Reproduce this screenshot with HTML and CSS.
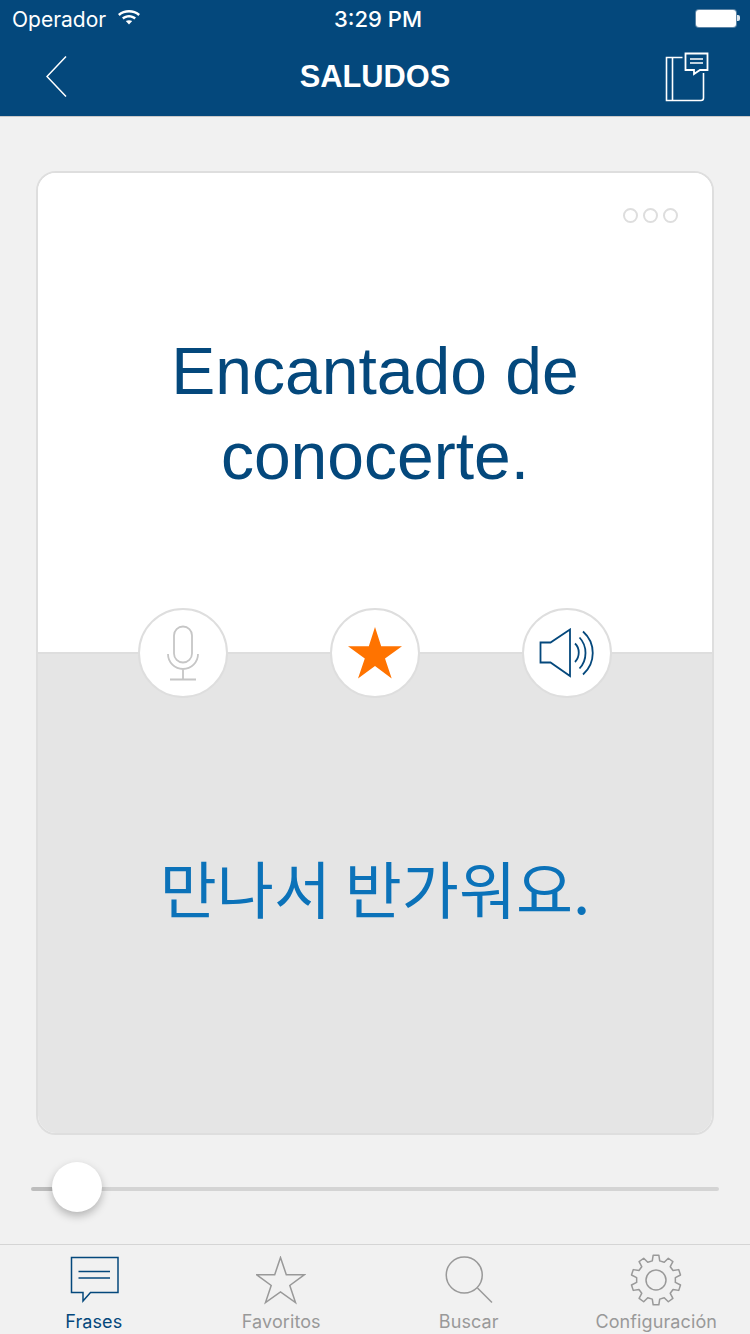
FILE: index.html
```html
<!DOCTYPE html>
<html lang="es">
<head>
<meta charset="utf-8">
<title>Saludos</title>
<link rel="stylesheet" href="styles.css">
</head>
<body>
<div class="app">
  <header class="header">
    <div class="status">
      <div class="status-left">
        <span>Operador</span>
        <svg class="wifi" width="24" height="17" viewBox="0 0 24 16"><path d="M1 5.500C7 0 17 0 23 5.500L21.300 7.400C16.300 3 7.700 3 2.700 7.400Z" fill="#fff"/><path d="M5 9C9 5.600 15 5.600 19 9L17.300 10.900C14 8.400 10 8.400 6.700 10.900Z" fill="#fff"/><path d="M8.800 12.600C10.800 11.300 13.200 11.300 15.200 12.600L12 16Z" fill="#fff"/></svg>
      </div>
      <span class="clock">3:29 PM</span>
      <div class="status-right">
        <div class="battery"></div>
        <div class="battery-tip"></div>
      </div>
    </div>
    <nav class="nav">
      <svg class="back" width="21" height="41" viewBox="0 0 21 41"><path d="M20 .5L1 20.500L20 40.500" fill="none" stroke="#fff" stroke-width="1.500"/></svg>
      <h1 class="title">SALUDOS</h1>
      <svg class="book" width="44" height="50" viewBox="0 0 44 50"><path d="M38.500 21V46Q38.500 48.500 36 48.500H1.500V5.500H17.500M7.500 5.500V48.500" fill="none" stroke="#fff" stroke-width="1.600"/><path d="M20.500 1.500H42.500V18H35L29 22V18H20.500Z" fill="none" stroke="#fff" stroke-width="1.800"/><path d="M25 7H38M25 11H38" stroke="#fff" stroke-width="1.500"/></svg>
    </nav>
  </header>

  <main class="main">
    <section class="card">
      <div class="front">
        <div class="dots"><i></i><i></i><i></i></div>
        <p class="phrase">Encantado de<br>conocerte.</p>
      </div>
      <div class="back-side">
        <p class="translation">만나서 반가워요.</p>
      </div>
      <div class="actions">
        <button class="round">
          <svg width="34" height="56" viewBox="0 0 34 56"><rect x="8" y="1.500" width="18" height="36" rx="9" fill="none" stroke="#c6c6c6" stroke-width="1.800"/><path d="M2 29A15 15 0 0 0 32 29M17 44V54.500M4 54.500H30" fill="none" stroke="#c6c6c6" stroke-width="1.800"/></svg>
        </button>
        <button class="round">
          <svg width="56" height="54" viewBox="0 0 56 54"><path d="M28 1L34.200 20.300H55L38 32.500L44.700 52.500L28 40L11 52.500L17.800 32.500L1 20.300H21.800Z" fill="#ff7300"/></svg>
        </button>
        <button class="round">
          <svg width="56" height="50" viewBox="0 0 56 50"><path d="M1.500 14.500H11.500L31 1.500V48L11.500 34.500H1.500Z" fill="none" stroke="#04487c" stroke-width="1.800"/><path d="M36 15.500C41 20 41 29 36 34M40.500 9.500C48.500 18 48.500 32 40.500 40.500M44 3.500C57 15 57 35 44 46.500" fill="none" stroke="#04487c" stroke-width="1.800"/></svg>
        </button>
      </div>
    </section>
    <div class="slider">
      <div class="track"></div>
      <div class="thumb"></div>
    </div>
  </main>

  <footer class="tabs">
    <div class="tab active">
      <svg width="50" height="50" viewBox="0 0 50 50"><path d="M2.500 1.500H49V36.500H21.500L14 45V36.500H2.500Z" fill="none" stroke="#04487c" stroke-width="1.500"/><path d="M9.500 15.500H41M9.500 22H41" stroke="#04487c" stroke-width="1.500"/></svg>
      <span>Frases</span>
    </div>
    <div class="tab">
      <svg width="50" height="50" viewBox="0 0 50 50"><path d="M24.500 1.500L30.300 18.700H48.500L33.800 29.500L39.500 46.500L24.500 36L9.500 46.500L15.200 29.500L.5 18.700H18.700Z" fill="none" stroke="#999" stroke-width="1.500"/></svg>
      <span>Favoritos</span>
    </div>
    <div class="tab">
      <svg width="50" height="50" viewBox="0 0 50 50"><circle cx="20.250" cy="19" r="18" fill="none" stroke="#999" stroke-width="1.500"/><path d="M33.500 32L48 46.500" stroke="#999" stroke-width="1.500"/></svg>
      <span>Buscar</span>
    </div>
    <div class="tab">
      <svg class="gear" width="52" height="52" viewBox="0 0 52 52"><path d="M22.280 6.860L23.170 1.160H28.830L29.720 6.860L34.240 8.330L38.310 4.240L42.890 7.570L40.260 12.700L43.050 16.550L48.750 15.630L50.500 21.020L45.350 23.620V28.380L50.500 30.980L48.750 36.370L43.050 35.450L40.260 39.300L42.890 44.430L38.310 47.760L34.240 43.670L29.720 45.140L28.830 50.840H23.170L22.280 45.140L17.760 43.670L13.690 47.760L9.110 44.430L11.740 39.300L8.950 35.450L3.250 36.370L1.500 30.980L6.650 28.380V23.620L1.500 21.020L3.250 15.630L8.950 16.550L11.740 12.700L9.110 7.570L13.690 4.240L17.760 8.330Z" fill="none" stroke="#999" stroke-width="1.500" stroke-linejoin="round"/><circle cx="26" cy="26" r="10" fill="none" stroke="#999" stroke-width="1.500"/></svg>
      <span>Configuración</span>
    </div>
  </footer>
</div>
</body>
</html>
```
FILE: styles.css
```css
* { box-sizing: border-box; }
html, body { margin: 0; padding: 0; }
body { width: 750px; height: 1334px; overflow: hidden; background: #f1f1f1; font-family: "Liberation Sans", Arial, sans-serif; }
.app { width: 750px; height: 1334px; display: flex; flex-direction: column; }

.header { height: 117px; background: #04487c; border-bottom: 1px solid #c9c9c9; color: #fff; flex: none; display: flex; flex-direction: column; }
.status { height: 40px; padding: 0 10px 0 12px; display: grid; grid-template-columns: 1fr auto 1fr; align-items: center; font-family: Inter, sans-serif; font-size: 21px; }
.status-left { display: flex; align-items: center; gap: 11px; height: 40px; padding-bottom: 2px; }
.wifi { margin-top: -6px; }
.clock { font-size: 22px; font-weight: 500; padding-bottom: 2px; margin-left: 4px; }
.status-right { display: flex; justify-content: flex-end; align-items: center; padding-bottom: 4px; }
.battery { width: 40px; height: 17px; border-radius: 3px; background: #fff; box-shadow: 0 0 0 1px #5d85a6; }
.battery-tip { width: 3px; height: 6px; background: #dfe7ee; border-radius: 0 2px 2px 0; margin-left: 1px; }
.nav { flex: 1; display: flex; align-items: center; justify-content: space-between; padding: 0 41px 0 46px; position: relative; }
.title { margin: -2px 0 0; font-size: 30.800px; font-weight: 700; position: absolute; left: 0; right: 0; text-align: center; line-height: 36px; }
.back { display: block; margin-top: -4px; }
.book { display: block; margin-top: -3px; }

.main { flex: 1; padding: 54px 36px 0; display: flex; flex-direction: column; }
.card { height: 964px; border: 2px solid #dedede; border-radius: 20px; overflow: hidden; background: #fff; display: flex; flex-direction: column; position: relative; flex: none; }
.front { height: 481px; background: #fff; border-bottom: 2px solid #dedede; position: relative; display: flex; align-items: center; justify-content: center; flex: none; padding-top: 3px; }
.dots { position: absolute; top: 35px; right: 34px; display: flex; gap: 5px; }
.dots i { width: 15px; height: 15px; border-radius: 50%; border: 2px solid #dedede; display: block; }
.phrase { margin: 0; text-align: center; color: #04487c; font-size: 66px; line-height: 85px; }
.back-side { flex: 1; background: #e5e5e5; display: flex; justify-content: center; padding-top: 191px; }
.translation { margin: 0; color: #0b72b9; font-family: "Noto Sans CJK KR", sans-serif; font-weight: 400; font-size: 62px; line-height: 84px; }
.actions { position: absolute; left: 100px; top: 435px; display: flex; gap: 102px; }
.round { width: 90px; height: 90px; padding: 0; border-radius: 50%; border: 2px solid #dedede; background: #fff; display: flex; align-items: center; justify-content: center; }
.round svg { display: block; }

.slider { position: relative; height: 108px; flex: none; margin: 0 -5px; display: flex; align-items: center; }
.track { width: 100%; height: 4px; border-radius: 2px; background: linear-gradient(to right, #bdbdbd 30px, #d4d4d4 30px); }
.thumb { position: absolute; left: 21px; top: 27px; width: 50px; height: 50px; border-radius: 50%; background: #fff; box-shadow: 0 4px 8px rgba(0,0,0,.25); }

.tabs { height: 90px; flex: none; border-top: 1px solid #d5d5d5; display: grid; grid-template-columns: repeat(4, 1fr); background: #f1f1f1; overflow: hidden; }
.tab { display: flex; flex-direction: column; align-items: center; color: #999; font-family: Inter, sans-serif; font-size: 18px; letter-spacing: .1px; padding-top: 11px; }
.tab svg { display: block; flex: none; }
.tab .gear { margin: -2px 0 0; }
.tab span { line-height: 22px; margin-top: 5px; }
.tab.active { color: #04487c; }
```
